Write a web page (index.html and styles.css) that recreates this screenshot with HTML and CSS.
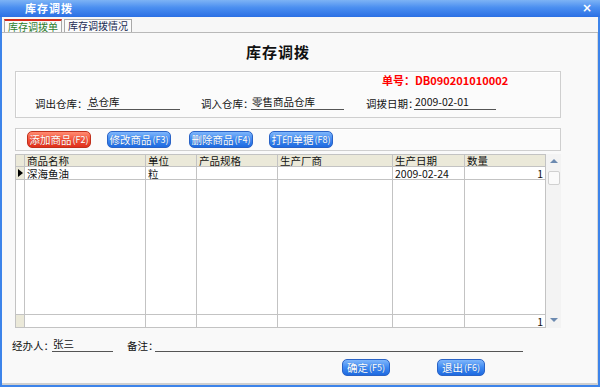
FILE: index.html
```html
<!DOCTYPE html>
<html>
<head>
<meta charset="utf-8">
<link rel="stylesheet" href="styles.css">
</head>
<body>
<div class="window">
  <div class="titlebar">
    <span class="title">库存调拨</span>
    <span class="close">×</span>
  </div>
  <div class="tabs">
    <div class="tab active">库存调拨单</div>
    <div class="tab">库存调拨情况</div>
  </div>
  <div class="content">
    <div class="heading">库存调拨</div>
    <div class="group info">
      <div class="billno">单号：DB090201010002</div>
      <div class="fields">
        <span class="lbl l1">调出仓库：</span><span class="val v1">总仓库</span>
        <span class="lbl l2">调入仓库：</span><span class="val v2">零售商品仓库</span>
        <span class="lbl l3">调拨日期：</span><span class="val v3">2009-02-01</span>
      </div>
    </div>
    <div class="group toolbar">
      <span class="btn red">添加商品<small>(F2)</small></span>
      <span class="btn blue">修改商品<small>(F3)</small></span>
      <span class="btn blue">删除商品<small>(F4)</small></span>
      <span class="btn blue">打印单据<small>(F8)</small></span>
    </div>
    <div class="gridwrap">
      <table class="grid">
        <colgroup>
          <col class="c0"><col class="c1"><col class="c2"><col class="c3"><col class="c4"><col class="c5"><col class="c6">
        </colgroup>
        <tr class="hdr"><td class="ind"></td><td>商品名称</td><td>单位</td><td>产品规格</td><td>生产厂商</td><td>生产日期</td><td>数量</td></tr>
        <tr class="row"><td class="ind"><span class="arrow"></span></td><td>深海鱼油</td><td>粒</td><td></td><td></td><td>2009-02-24</td><td class="num">1</td></tr>
        <tr class="fill"><td class="ind blank"></td><td></td><td></td><td></td><td></td><td></td><td></td></tr>
        <tr class="row total"><td class="ind"></td><td></td><td></td><td></td><td></td><td></td><td class="num">1</td></tr>
      </table>
      <div class="scroll">
        <span class="up"></span>
        <span class="thumb"></span>
        <span class="down"></span>
      </div>
    </div>
    <div class="footer">
      <span class="lbl who">经办人：</span><span class="val person">张三</span>
      <span class="lbl memo">备注：</span><span class="val memoline"></span>
    </div>
    <div class="actions">
      <span class="btn blue ok">确定<small>(F5)</small></span>
      <span class="btn blue quit">退出<small>(F6)</small></span>
    </div>
  </div>
</div>
</body>
</html>
```
FILE: styles.css
```css
* { box-sizing: border-box; }
html, body { margin: 0; padding: 0; }
body {
  width: 600px; height: 387px; overflow: hidden;
  font-family: "Noto Sans CJK SC", "DejaVu Sans", sans-serif;
  font-size: 11px; color: #111;
  background: #fff;
}
.window {
  width: 600px; height: 387px;
  display: flex; flex-direction: column;
  background: #3d84ea;
  padding: 0 2px 2px 2px;
}
.titlebar {
  height: 17px; flex: none;
  display: flex; align-items: center; justify-content: space-between;
  background: linear-gradient(#7db3f5, #4a8ef0 45%, #2b70e4);
  margin: 0 -2px;
  padding: 0 8px 0 25px;
}
.title { color: #fff; font-weight: bold; font-size: 11px; letter-spacing: 1px; line-height: 17px; }
.close { color: #fff; font-weight: bold; font-size: 12px; line-height: 17px; font-family: "DejaVu Sans", sans-serif; }
.tabs {
  height: 16px; flex: none;
  background: #f7f7f7;
  display: flex; align-items: flex-end;
  padding-left: 2px; gap: 2px;
  border-bottom: 1px solid #b9b9b9;
}
.tab {
  height: 13px; line-height: 11px;
  font-size: 10px; padding: 0 3px;
  border: 1px solid #a9a9a9; border-bottom: none;
  background: #fbfbfb; color: #1b2b55;
  white-space: nowrap;
}
.tab.active { color: #2d7d2d; border-top: 2px solid #d22a1a; }
.content {
  flex: 1;
  background: #f9f9f9;
  border-right: 1px solid #d8d8d8;
  border-bottom: 2px solid #cfcfcf;
  display: flex; flex-direction: column;
  padding-left: 13px;
}
.heading {
  margin-top: 10px; height: 18px; line-height: 18px;
  margin-left: 231px;
  font-size: 15px; font-weight: bold; letter-spacing: 1px;
}
.group {
  width: 546px;
  border: 1px solid #cfcfcf;
  box-shadow: inset 1px 1px 0 #fff;
  background: #fbfbfb;
}
.info { margin-top: 10px; height: 47px; }
.billno {
  margin: 2px 0 0 366px;
  color: #f00; font-weight: bold; font-size: 11px; line-height: 12px;
}
.fields { display: flex; align-items: flex-end; margin-top: 8px; height: 16px; }
.lbl { font-size: 10.5px; line-height: 13px; white-space: nowrap; flex: none; }
.val {
  display: inline-block; font-size: 10.5px; line-height: 13px; flex: none;
  border-bottom: 1px solid #555; height: 15px; padding-left: 1px; white-space: nowrap;
}
.l1 { margin-left: 19px; width: 52px; }
.v1 { width: 93px; }
.l2 { margin-left: 21px; width: 50px; }
.v2 { width: 93px; }
.l3 { margin-left: 22px; width: 48px; }
.v3 { width: 82px; }
.toolbar {
  margin-top: 10px; height: 23px;
  display: flex; align-items: center; padding-left: 11px; gap: 0;
}
.btn {
  display: inline-flex; align-items: center; justify-content: center;
  height: 17px; width: 64px; white-space: nowrap;
  border-radius: 5px;
  color: #fff; font-size: 10.5px; line-height: 15px;
  text-shadow: 0 0 1px rgba(0,0,0,.25);
}
.btn small { font-size: 9px; margin-left: 1px; }
.blue {
  background: linear-gradient(#7fb6fb, #3f8af2 50%, #1e6ae0);
  border: 1px solid #2a63c6;
}
.red {
  background: linear-gradient(#ff8c72, #f5533a 50%, #e0301c);
  border: 1px solid #c0301c;
}
.toolbar .btn + .btn { margin-left: 16px; }
.toolbar .btn:nth-child(3) { margin-left: 18px; }
.gridwrap {
  margin-top: 3px; height: 174px; width: 546px;
  display: flex;
}
.grid {
  border-collapse: collapse; table-layout: fixed;
  width: 530px; height: 174px;
  background: #fff;
}
.grid td {
  border: 1px solid #c3c3c3;
  padding: 0 2px; font-size: 10.5px; line-height: 11px;
  white-space: nowrap; vertical-align: middle;
}
.c0 { width: 9px; } .c1 { width: 121px; } .c2 { width: 51px; } .c3 { width: 81px; }
.c4 { width: 115px; } .c5 { width: 72px; } .c6 { width: 81px; }
.hdr td { background: #ebe9d9; height: 12px; }
.row td { height: 13px; }
.fill td { height: auto; }
.grid td.ind { background: #ebe9d9; padding: 0; }
.grid td.blank { background: #fff; }
.num { text-align: right; }
.arrow {
  display: block; width: 0; height: 0; margin-left: 2px;
  border-left: 5px solid #000; border-top: 4px solid transparent; border-bottom: 4px solid transparent;
}
.scroll {
  width: 15px; height: 174px;
  background: #f3f3f3;
  display: flex; flex-direction: column; align-items: center;
}
.up {
  margin-top: 5px; width: 0; height: 0;
  border-bottom: 4px solid #6c8ab0; border-left: 4px solid transparent; border-right: 4px solid transparent;
}
.thumb {
  margin-top: 8px; width: 12px; height: 14px;
  background: #fafafa; border: 1px solid #d0d0d0; border-radius: 2px;
}
.down {
  margin-top: auto; margin-bottom: 6px; width: 0; height: 0;
  border-top: 4px solid #6c8ab0; border-left: 4px solid transparent; border-right: 4px solid transparent;
}
.footer {
  margin-top: 8px; height: 16px; margin-left: -3px;
  display: flex; align-items: flex-end;
}
.who { width: 40px; }
.person { width: 61px; }
.memo { margin-left: 14px; width: 28px; }
.memoline { width: 368px; }
.actions {
  margin-top: 7px; display: flex;
}
.actions .btn { width: 48px; }
.ok { margin-left: 327px; }
.quit { margin-left: 47px; }
```
